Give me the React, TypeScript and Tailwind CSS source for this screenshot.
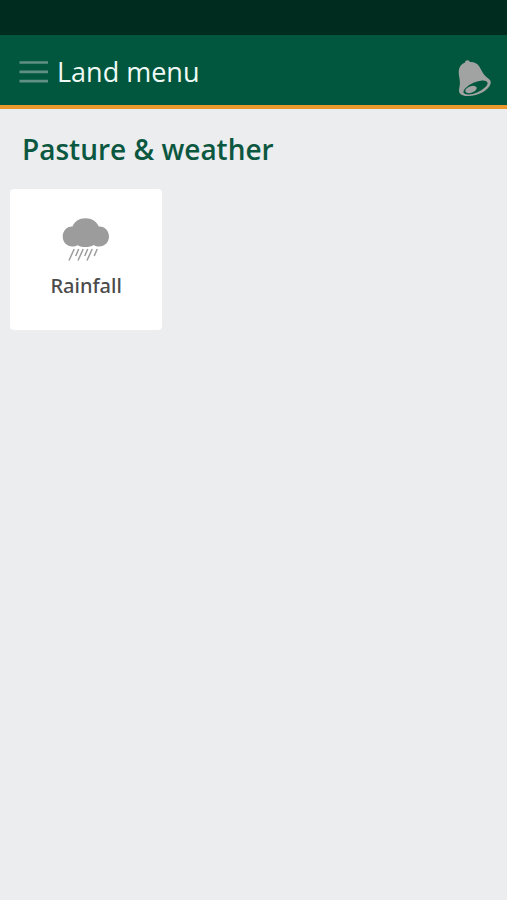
type TileProps = {
  label: string;
  href: string;
  icon: React.ReactNode;
};

const MenuIcon = () => (
  <svg viewBox="0 0 30 24" className="h-6 w-[30px] text-[#5f9083]" fill="currentColor" aria-hidden="true">
    <path d="M.5 1.2h28.5v2.6H.5zM.5 10.6h28.5v2.6H.5zM.5 19.8h28.5v2.6H.5z" />
  </svg>
);

const BellIcon = () => (
  <svg viewBox="0 0 36 40" className="h-10 w-9 text-[#a0a3a1]" aria-hidden="true">
    <path
      fill="currentColor"
      d="M8 4.600C8.300 1.800 11.800 1.400 13 4c4.200-.2 7.400 1.400 9.300 4.600 2.700 4.600 4 8.400 8.400 11.400 2.200 1.500 3.400 3 3 5.200-1.300 7-13.600 13.400-23.700 12.800-5.200-.3-8.200-2.400-8-5.600.2-2.600 1-5 .9-8.400-.2-4.300-1.500-7-1.100-11.500C2.200 8.600 4.600 5.800 8 4.600z"
    />
    <ellipse cx="18.500" cy="29.500" rx="13" ry="5.200" transform="rotate(-24 18.500 29.500)" fill="#00573d" />
    <ellipse cx="14" cy="31.500" rx="6" ry="3.200" transform="rotate(-20 14 31.500)" fill="currentColor" />
  </svg>
);

const RainIcon = () => (
  <svg viewBox="0 0 48 44" className="h-11 w-12 text-[#9c9c9c]" aria-hidden="true">
    <path
      fill="currentColor"
      d="M10.500 8.600C12.200 3.500 17.200.2 23.500.2S34.900 3.500 36.800 8.600C42.700 8.200 47 13 47 18.600c0 5.700-4.300 10-10 10-2 0-3.700-.5-5.200-1.500-2.300 1.400-5.100 2-8.300 2s-5.800-.6-7.900-1.900c-1.500.9-3.200 1.400-5 1.400C4.900 28.600.7 24.300.7 18.600c0-5.600 4.200-10.400 9.800-10z"
    />
    <path
      stroke="currentColor"
      strokeWidth="1.500"
      d="M12.200 31 7 42.500M16.700 31l-3 7M21.200 31 16 42.500M25.700 31l-3 7M30.200 31 25 42.500M35.200 31l-3 7"
    />
  </svg>
);

function Tile({ label, href, icon }: TileProps) {
  return (
    <a
      href={href}
      className="flex h-[141px] flex-col items-center gap-2 rounded bg-white pt-[29px] font-['Noto_Sans',sans-serif] text-[#4b4b4b]"
    >
      {icon}
      <span className="text-xl leading-8 font-medium">{label}</span>
    </a>
  );
}

export default function App() {
  return (
    <div className="min-h-screen bg-[#ebedef] font-['Open_Sans',sans-serif]">
      {/* Status bar area */}
      <div className="h-[35px] bg-[#002c20]" />

      <header className="flex h-[74px] items-center justify-between border-b-4 border-[#eb982c] bg-[#00573d] pt-1 pr-[14px] pl-[19px]">
        <div className="flex items-center gap-2">
          <button type="button" aria-label="Open menu">
            <MenuIcon />
          </button>
          <h1 className="text-[27px] leading-9 text-[#effaf6]">Land menu</h1>
        </div>
        <button type="button" aria-label="Notifications" className="pt-3">
          <BellIcon />
        </button>
      </header>

      <main className="px-[10px] pt-5">
        <h2 className="px-3 text-[28px] leading-10 font-semibold text-[#0b573f]">Pasture &amp; weather</h2>
        <div className="mt-5 grid grid-cols-[repeat(auto-fill,minmax(152px,1fr))] gap-[15px]">
          <Tile label="Rainfall" href="#rainfall" icon={<RainIcon />} />
        </div>
      </main>
    </div>
  );
}
